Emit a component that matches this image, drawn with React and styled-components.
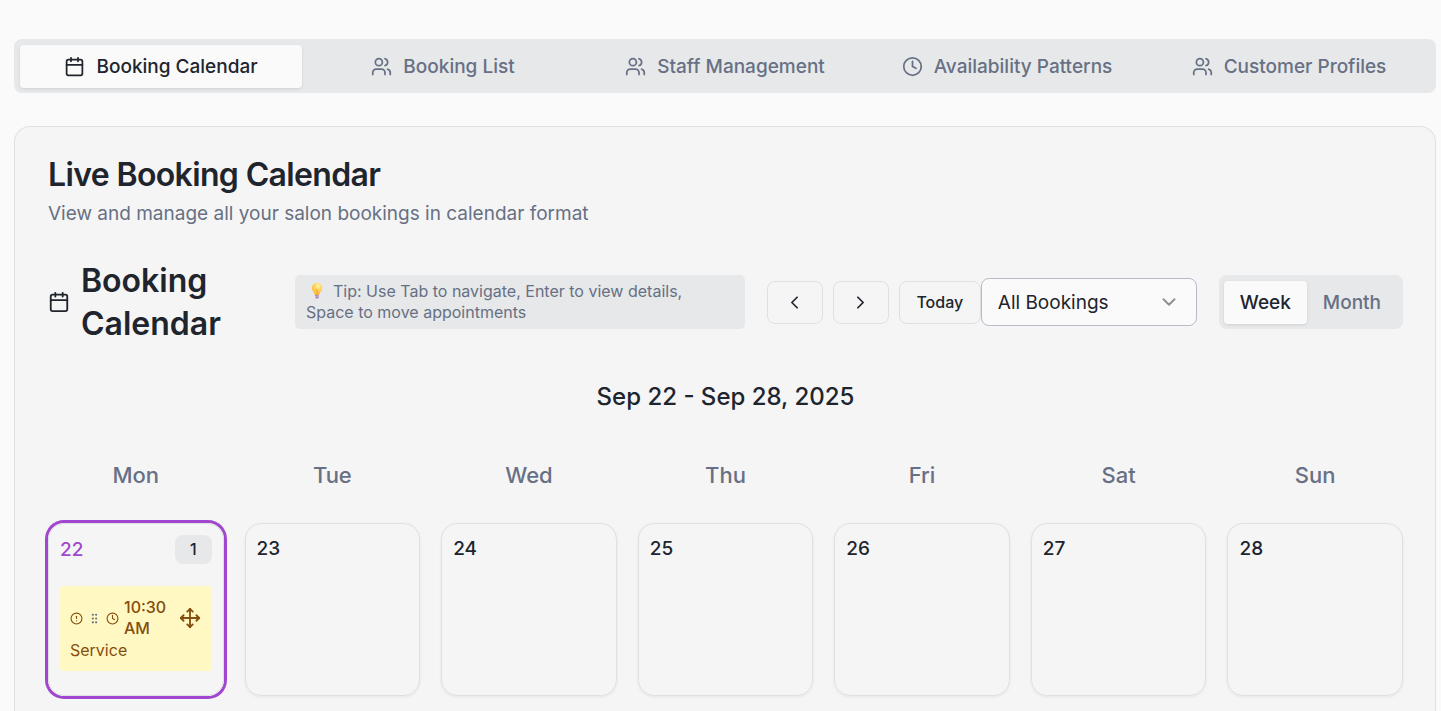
import React, { useState } from "react";
import styled, { createGlobalStyle, ThemeProvider } from "styled-components";
import {
  Calendar,
  ChevronDown,
  ChevronLeft,
  ChevronRight,
  CircleAlert,
  Clock,
  GripVertical,
  Move,
  Users,
} from "lucide-react";

const theme = {
  page: "#fafafa",
  card: "#f5f5f5",
  border: "#dfe0e2",
  inputBorder: "#b7bac8",
  muted: "#e6e8e9",
  text: "#20242d",
  mutedText: "#677084",
  accent: "#a146cf",
  pendingBg: "#fff8c2",
  pendingText: "#854d0e",
};

const GlobalStyle = createGlobalStyle`
  *, *::before, *::after { box-sizing: border-box; }
  body {
    margin: 0;
    background: ${theme.page};
    color: ${theme.text};
    font-family: Inter, "Liberation Sans", sans-serif;
  }
  button, select { font-family: inherit; color: inherit; margin: 0; }
  h1, h2, h3, p { margin: 0; }
  svg { flex-shrink: 0; }
`;

const Page = styled.main`
  display: flex;
  flex-direction: column;
  gap: 33px;
  min-height: 100vh;
  padding: 39px 5px 0 14px;
`;

const TabBar = styled.nav`
  display: grid;
  grid-template-columns: repeat(5, 1fr);
  height: 54px;
  padding: 6px 6px 5px;
  border-radius: 8px;
  background: ${({ theme }) => theme.muted};
`;

const TabButton = styled.button`
  display: flex;
  align-items: center;
  justify-content: center;
  gap: 11px;
  padding: 0 16px;
  border: 0;
  border-radius: 4px;
  font-size: 19px;
  line-height: 27px;
  font-weight: 500;
  white-space: nowrap;
  cursor: pointer;
  background: ${({ $active, theme }) => ($active ? theme.page : "transparent")};
  color: ${({ $active, theme }) => ($active ? theme.text : theme.mutedText)};
  box-shadow: ${({ $active }) => ($active ? "0 1px 3px rgba(0, 0, 0, 0.1)" : "none")};
`;

const Card = styled.section`
  flex: 1;
  padding: 26px 32px 33px 33px;
  border: 1px solid ${({ theme }) => theme.border};
  border-bottom: 0;
  border-radius: 16px 16px 0 0;
  background: ${({ theme }) => theme.card};
`;

const CardTitle = styled.h1`
  font-size: 32px;
  line-height: 43px;
  font-weight: 600;
  letter-spacing: -0.02em;
`;

const CardDescription = styled.p`
  margin-top: 4px;
  font-size: 19px;
  line-height: 27px;
  color: ${({ theme }) => theme.mutedText};
`;

const Toolbar = styled.div`
  display: flex;
  align-items: center;
  gap: 22px;
  margin-top: 32px;
`;

const ToolbarHeading = styled.div`
  display: flex;
  align-items: center;
  gap: 11px;
  width: 225px;
`;

const Heading = styled.h2`
  font-size: 32px;
  line-height: 43px;
  font-weight: 600;
`;

const Tip = styled.p`
  flex: 1;
  padding: 6px 11px;
  border-radius: 5px;
  background: ${({ theme }) => theme.muted};
  color: ${({ theme }) => theme.mutedText};
  font-size: 16px;
  line-height: 21px;
`;

const BulbIcon = styled.svg`
  width: 22px;
  height: 18px;
  margin-right: 5px;
  vertical-align: -3px;
`;

const Controls = styled.div`
  display: flex;
  align-items: center;
`;

const ButtonGroup = styled.div`
  display: flex;
  gap: 10px;
`;

const OutlineButton = styled.button`
  display: flex;
  align-items: center;
  justify-content: center;
  width: ${({ $wide }) => ($wide ? "82px" : "56px")};
  height: 43px;
  padding: 0;
  border: 1px solid ${({ theme }) => theme.border};
  border-radius: 8px;
  background: ${({ theme }) => theme.card};
  font-size: 16px;
  line-height: 21px;
  font-weight: 500;
  cursor: pointer;
`;

const SelectField = styled.label`
  position: relative;
  display: block;

  svg {
    position: absolute;
    top: 13px;
    right: 17px;
    opacity: 0.5;
    pointer-events: none;
  }
`;

const Select = styled.select`
  appearance: none;
  width: 216px;
  height: 48px;
  padding: 0 40px 0 16px;
  border: 1px solid ${({ theme }) => theme.inputBorder};
  border-radius: 8px;
  background: ${({ theme }) => theme.page};
  font-size: 19px;
  line-height: 27px;
`;

const ViewSwitch = styled.div`
  display: flex;
  height: 54px;
  padding: 6px 6px 5px 5px;
  border-radius: 8px;
  background: ${({ theme }) => theme.muted};
`;

const RangeTitle = styled.h3`
  margin-top: 35px;
  text-align: center;
  font-size: 24px;
  line-height: 34px;
  font-weight: 500;
`;

const WeekGrid = styled.div`
  display: grid;
  grid-template-columns: repeat(7, 1fr);
  column-gap: 21px;
  row-gap: 32px;
  margin-top: 45px;
`;

const DayName = styled.div`
  text-align: center;
  font-size: 22px;
  line-height: 32px;
  font-weight: 500;
  color: ${({ theme }) => theme.mutedText};
`;

const DayCell = styled.article`
  min-height: 173px;
  padding: 11px;
  border: 1px solid ${({ theme }) => theme.border};
  border-radius: 16px;
  box-shadow: ${({ $today, theme }) =>
    $today ? `0 0 0 3px ${theme.accent}` : "0 1px 3px rgba(0, 0, 0, 0.07)"};
`;

const DayHeader = styled.header`
  display: flex;
  align-items: center;
  justify-content: space-between;
  min-height: 27px;
`;

const DayNumber = styled.span`
  font-size: 19px;
  line-height: 27px;
  font-weight: 500;
  color: ${({ $today, theme }) => ($today ? theme.accent : theme.text)};
`;

const CountBadge = styled.span`
  padding: 4px 15px;
  border-radius: 8px;
  background: ${({ theme }) => theme.muted};
  font-size: 16px;
  line-height: 21px;
  font-weight: 500;
`;

const Booking = styled.div`
  display: flex;
  flex-direction: column;
  gap: 1px;
  margin-top: 22px;
  padding: 11px 11px 10px 10px;
  border-radius: 4px;
  background: ${({ theme }) => theme.pendingBg};
  color: ${({ theme }) => theme.pendingText};
  font-size: 16px;
  line-height: 21px;
`;

const BookingRow = styled.div`
  display: flex;
  align-items: center;
  gap: 5px;
`;

const BookingTime = styled.span`
  flex: 1;
  font-weight: 500;
`;

const GripIcon = styled(GripVertical)`
  color: ${({ theme }) => theme.mutedText};
`;

const tabs = [
  { label: "Booking Calendar", Icon: Calendar },
  { label: "Booking List", Icon: Users },
  { label: "Staff Management", Icon: Users },
  { label: "Availability Patterns", Icon: Clock },
  { label: "Customer Profiles", Icon: Users },
];

const days = [
  { name: "Mon", date: 22, today: true, bookings: [{ time: "10:30 AM", title: "Service" }] },
  { name: "Tue", date: 23, bookings: [] },
  { name: "Wed", date: 24, bookings: [] },
  { name: "Thu", date: 25, bookings: [] },
  { name: "Fri", date: 26, bookings: [] },
  { name: "Sat", date: 27, bookings: [] },
  { name: "Sun", date: 28, bookings: [] },
];

function Bulb() {
  return (
    <BulbIcon viewBox="0 0 22 18" aria-hidden="true">
      <defs>
        <radialGradient id="bulbGlow" cx="0.6" cy="0.25" r="0.8">
          <stop offset="0" stopColor="#fff3b0" />
          <stop offset="0.4" stopColor="#ffd75e" />
          <stop offset="1" stopColor="#f9b233" />
        </radialGradient>
      </defs>
      <path
        d="M11 1C7.9 1 5.8 3.2 5.8 6c0 2.3 1.5 3.4 2.3 4.9.4.8.5 1.6.7 2.1h4.4c.2-.5.3-1.3.7-2.1.8-1.5 2.3-2.6 2.3-4.9C16.200 3.200 14.100 1 11 1z"
        fill="url(#bulbGlow)"
      />
      <path d="M9.600 7.200l1.400 1.300 1.400-1.300M11 8.500V13" fill="none" stroke="#f39a2b" strokeWidth="0.800" />
      <path d="M9 13h4v1.800l-.8 1.700H9.800L9 14.800z" fill="#a58bb5" />
      <path d="M9 14.600l4-.7" stroke="#d5c6de" strokeWidth="0.700" />
    </BulbIcon>
  );
}

export default function App() {
  const [activeTab, setActiveTab] = useState("Booking Calendar");
  const [view, setView] = useState("Week");

  return (
    <ThemeProvider theme={theme}>
      <GlobalStyle />
      <Page>
        <TabBar>
          {tabs.map(({ label, Icon }) => (
            <TabButton
              key={label}
              type="button"
              $active={label === activeTab}
              onClick={() => setActiveTab(label)}
            >
              <Icon size={21} />
              {label}
            </TabButton>
          ))}
        </TabBar>

        <Card>
          <CardTitle>Live Booking Calendar</CardTitle>
          <CardDescription>View and manage all your salon bookings in calendar format</CardDescription>

          <Toolbar>
            <ToolbarHeading>
              <Calendar size={22} />
              <Heading>Booking Calendar</Heading>
            </ToolbarHeading>
            <Tip>
              <Bulb />
              Tip: Use Tab to navigate, Enter to view details, Space to move appointments
            </Tip>
            <Controls>
              <ButtonGroup>
                <OutlineButton type="button" aria-label="Previous week">
                  <ChevronLeft size={21} />
                </OutlineButton>
                <OutlineButton type="button" aria-label="Next week">
                  <ChevronRight size={21} />
                </OutlineButton>
                <OutlineButton type="button" $wide>
                  Today
                </OutlineButton>
              </ButtonGroup>
              <SelectField>
                <Select aria-label="Filter bookings" defaultValue="all">
                  <option value="all">All Bookings</option>
                </Select>
                <ChevronDown size={22} />
              </SelectField>
            </Controls>
            <ViewSwitch>
              {["Week", "Month"].map((name) => (
                <TabButton
                  key={name}
                  type="button"
                  $active={name === view}
                  onClick={() => setView(name)}
                >
                  {name}
                </TabButton>
              ))}
            </ViewSwitch>
          </Toolbar>

          <RangeTitle>Sep 22 - Sep 28, 2025</RangeTitle>

          <WeekGrid>
            {days.map((day) => (
              <DayName key={day.name}>{day.name}</DayName>
            ))}
            {days.map((day) => (
              <DayCell key={day.date} $today={day.today}>
                <DayHeader>
                  <DayNumber $today={day.today}>{day.date}</DayNumber>
                  {day.bookings.length > 0 && <CountBadge>{day.bookings.length}</CountBadge>}
                </DayHeader>
                {day.bookings.map((booking) => (
                  <Booking key={booking.time}>
                    <BookingRow>
                      <CircleAlert size={13} />
                      <GripIcon size={13} />
                      <Clock size={13} />
                      <BookingTime>{booking.time}</BookingTime>
                      <Move size={22} />
                    </BookingRow>
                    <span>{booking.title}</span>
                  </Booking>
                ))}
              </DayCell>
            ))}
          </WeekGrid>
        </Card>
      </Page>
    </ThemeProvider>
  );
}
